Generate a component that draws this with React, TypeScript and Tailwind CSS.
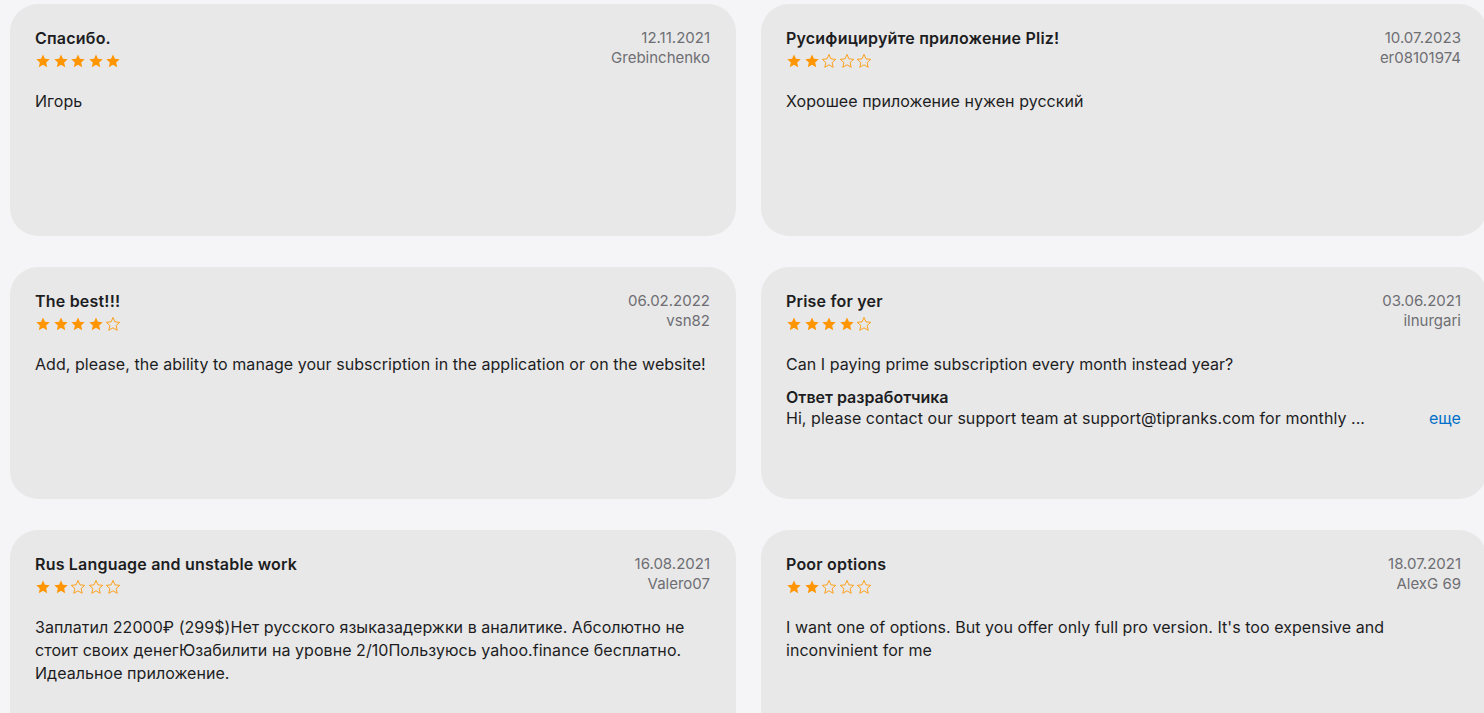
type Review = {
  title: string;
  date: string;
  author: string;
  rating: number;
  body: string;
  response?: string;
};

const reviews: Review[] = [
  { title: 'Спасибо.', date: '12.11.2021', author: 'Grebinchenko', rating: 5, body: 'Игорь' },
  { title: 'Русифицируйте приложение Pliz!', date: '10.07.2023', author: 'er08101974', rating: 2, body: 'Хорошее приложение нужен русский' },
  { title: 'The best!!!', date: '06.02.2022', author: 'vsn82', rating: 4, body: 'Add, please, the ability to manage your subscription in the application or on the website!' },
  {
    title: 'Prise for yer',
    date: '03.06.2021',
    author: 'ilnurgari',
    rating: 4,
    body: 'Can I paying prime subscription every month instead year?',
    response: 'Hi, please contact our support team at support@tipranks.com for monthly ...',
  },
  {
    title: 'Rus Language and unstable work',
    date: '16.08.2021',
    author: 'Valero07',
    rating: 2,
    body: 'Заплатил 22000₽ (299$)Нет русского языказадержки в аналитике. Абсолютно не стоит своих денегЮзабилити на уровне 2/10Пользуюсь yahoo.finance бесплатно. Идеальное приложение.',
  },
  { title: 'Poor options', date: '18.07.2021', author: 'AlexG 69', rating: 2, body: "I want one of options. But you offer only full pro version. It's too expensive and inconvinient for me" },
];

function Star({ filled }: { filled: boolean }) {
  return (
    <svg width="16" height="16" viewBox="0 0 24 24" className="shrink-0">
      <path
        d="M12 2.2l2.9 6.6 7.2.7-5.4 4.8 1.6 7.1L12 17.7l-6.3 3.7 1.6-7.1-5.4-4.8 7.2-.7z"
        fill={filled ? '#ff9500' : 'none'}
        stroke="#ff9500"
        strokeWidth={filled ? 0 : 1.3}
        strokeLinejoin="round"
      />
    </svg>
  );
}

function Stars({ rating }: { rating: number }) {
  return (
    <div className="flex items-center gap-[1.5px] mt-[5px]">
      {[1, 2, 3, 4, 5].map((i) => (
        <Star key={i} filled={i <= rating} />
      ))}
    </div>
  );
}

function ReviewCard({ review }: { review: Review }) {
  return (
    <div className="h-[232px] rounded-[28px] bg-[#e8e8e8] pl-[25px] pr-[26px] pt-[24px] overflow-hidden">
      <div className="flex justify-between">
        <div>
          <h3 className="text-[16px] leading-[20px] font-semibold tracking-[0.2px] text-[#1d1d1f]">{review.title}</h3>
          <Stars rating={review.rating} />
        </div>
        <div className="text-right text-[15px] leading-[20px] text-[#6e6e73]">
          <div>{review.date}</div>
          <div>{review.author}</div>
        </div>
      </div>
      <p className="mt-[21px] text-[16px] leading-[23px] tracking-[0.05px] text-[#1d1d1f]">{review.body}</p>
      {review.response && (
        <div className="mt-[11px]">
          <h4 className="text-[16px] leading-[21px] font-semibold text-[#1d1d1f]">Ответ разработчика</h4>
          <div className="flex justify-between text-[16px] leading-[21px] tracking-[0.05px]">
            <span className="text-[#1d1d1f]">{review.response}</span>
            <span className="text-[#0070c9]">еще</span>
          </div>
        </div>
      )}
    </div>
  );
}

export default function App() {
  return (
    <div
      className="h-[713px] w-full overflow-hidden bg-[#f5f5f7] pl-[10px] pt-[4px]"
      style={{ fontFamily: 'Inter, "Noto Sans", sans-serif' }}
    >
      <div className="grid grid-cols-[726px_726px] gap-x-[25px] gap-y-[31px]">
        {reviews.map((r) => (
          <ReviewCard key={r.title} review={r} />
        ))}
      </div>
    </div>
  );
}
